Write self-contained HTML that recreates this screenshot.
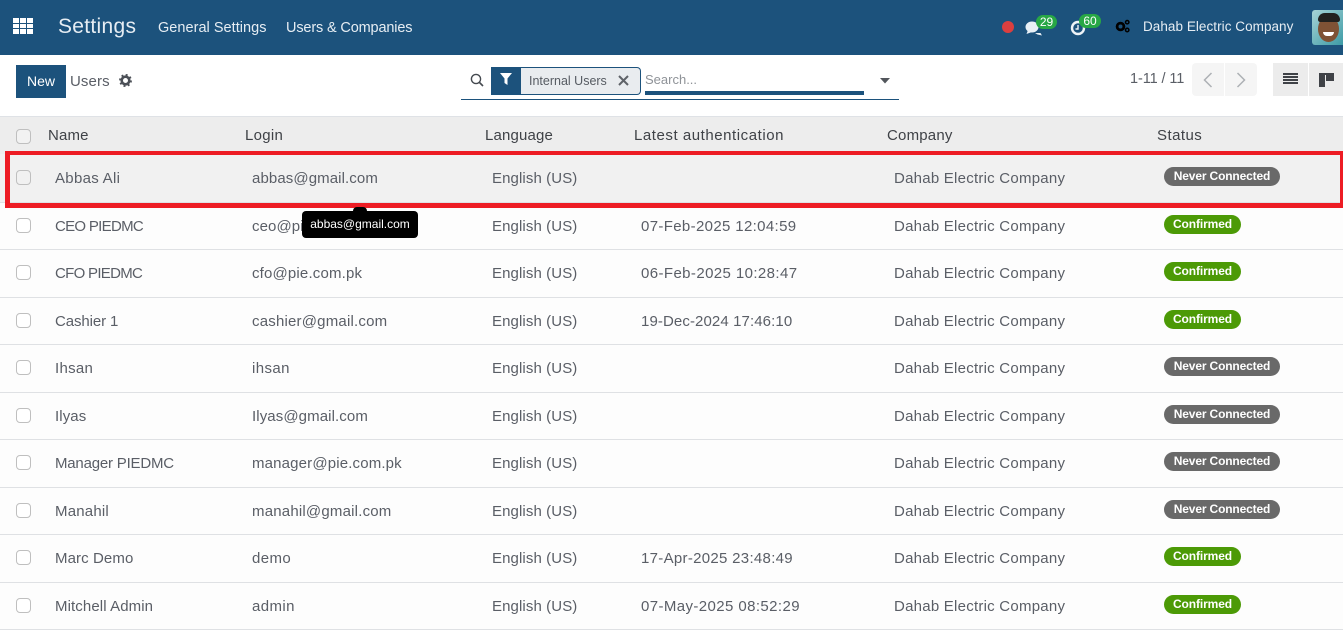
<!DOCTYPE html>
<html><head><meta charset="utf-8"><title>Users</title>
<style>
html,body{margin:0;padding:0;background:#fff}
#p{position:relative;width:1343px;height:631px;overflow:hidden;background:#fff;font-family:"Liberation Sans",sans-serif;color:#4c5057}
#p div,#p svg{position:absolute}
.t{white-space:nowrap;line-height:20px}
.nav{top:0;left:0;width:1343px;height:55px;background:#1c527c}
.r{left:0;width:1343px;background:#fdfdfd;border-bottom:1px solid #dfe1e4;box-sizing:border-box}
.c{white-space:nowrap;font-size:15px;line-height:20px;letter-spacing:.1px;color:#5a5e66;margin-top:1px}
.co{left:894px;letter-spacing:.24px}
.h{white-space:nowrap;font-size:15px;line-height:20px;letter-spacing:.15px;color:#3f4247;top:125px}
.cb{left:16px;width:13px;height:13px;border:1px solid #bfbfbf;border-radius:4px;background:#fff}
.b{left:1164px;height:19px;border-radius:10px;color:#fff;font-size:12px;font-weight:bold;line-height:18px;text-align:center;white-space:nowrap}
.n{width:116px;background:#696969;letter-spacing:-.15px}
.g{width:77px;background:#4c9a06;letter-spacing:-.1px}
.bd{background:#28a745;color:#fff;font-size:12px;line-height:14px;border-radius:8px;text-align:center;height:14px}
</style></head><body><div id="p">
<div class="nav"></div>
<svg style="left:13px;top:18px" width="20" height="16" viewBox="0 0 20 16" fill="#fff"><rect width="6" height="5"/><rect x="7" width="6" height="5"/><rect x="14" width="6" height="5"/><rect y="6" width="6" height="4"/><rect x="7" y="6" width="6" height="4"/><rect x="14" y="6" width="6" height="4"/><rect y="11" width="6" height="5"/><rect x="7" y="11" width="6" height="5"/><rect x="14" y="11" width="6" height="5"/></svg>
<div class="t" style="left:58px;top:16px;font-size:21px;line-height:22px;color:#e6edf3;letter-spacing:.3px">Settings</div>
<div class="t" style="left:158px;top:18px;font-size:14.5px;color:#e6edf3;letter-spacing:.03px">General Settings</div>
<div class="t" style="left:286px;top:18px;font-size:14.5px;color:#e6edf3;letter-spacing:-.15px">Users &amp; Companies</div>
<div style="left:1002px;top:21px;width:12px;height:12px;border-radius:6px;background:#dc3f3f"></div>
<svg style="left:1025px;top:19px" width="18" height="17" viewBox="0 0 18 17"><ellipse cx="7" cy="8" rx="6.5" ry="5.5" fill="#e8f0f6"/><path d="M3 11 L1.5 15 L7 13Z" fill="#e8f0f6"/><path d="M10 14 H15.5 L17 16.5 L12.5 15.5Z" fill="#e8f0f6"/></svg>
<div class="bd" style="left:1036px;top:15px;width:21px">29</div>
<svg style="left:1070px;top:19px" width="17" height="17" viewBox="0 0 17 17"><circle cx="8" cy="9" r="6" fill="none" stroke="#eef3f7" stroke-width="2.4"/><path d="M8 6V10H5.5" fill="none" stroke="#eef3f7" stroke-width="1.4"/></svg>
<div class="bd" style="left:1079px;top:14px;width:22px;height:14px;border-radius:8px">60</div>
<svg style="left:1115px;top:19px" width="15" height="14" viewBox="0 0 15 14"><circle cx="5.5" cy="7.5" r="3.4" fill="none" stroke="#000" stroke-width="2.8"/><circle cx="12.2" cy="3.2" r="1.7" fill="none" stroke="#000" stroke-width="1.5"/><circle cx="12.2" cy="11" r="1.7" fill="none" stroke="#000" stroke-width="1.5"/></svg>
<div class="t" style="left:1143px;top:17px;font-size:13.5px;color:#e6edf3;letter-spacing:.05px">Dahab Electric Company</div>
<div style="left:1312px;top:10px;width:31px;height:35px;border-radius:3px 0 0 3px;background:linear-gradient(135deg,#a7d3d6,#3d9ba6);overflow:hidden">
<div style="left:6px;top:6px;width:21px;height:26px;border-radius:50%;background:#7f5235"></div>
<div style="left:6px;top:3px;width:22px;height:9px;border-radius:9px 9px 3px 3px;background:#22211f"></div>
<div style="left:11px;top:22px;width:11px;height:4px;border-radius:0 0 6px 6px;background:#fff"></div>
</div>

<div style="left:16px;top:65px;width:50px;height:33px;background:#1c527c;color:#fff;font-size:14px;line-height:32px;text-align:center">New</div>
<div class="t" style="left:70px;top:72px;font-size:15px;color:#5a5e66;letter-spacing:.1px">Users</div>
<svg style="left:119px;top:74px" width="13" height="13" viewBox="0 0 13 13"><circle cx="6.5" cy="6.5" r="3.8" fill="none" stroke="#4c5057" stroke-width="2.6"/><circle cx="6.5" cy="6.5" r="5.6" fill="none" stroke="#4c5057" stroke-width="1.7" stroke-dasharray="2 2.4"/></svg>

<svg style="left:470px;top:73px" width="14" height="14" viewBox="0 0 14 14"><circle cx="6" cy="6" r="4.6" fill="none" stroke="#454a50" stroke-width="1.4"/><path d="M9.5 9.5L13 13" stroke="#454a50" stroke-width="1.6"/></svg>
<div style="left:491px;top:67px;width:149px;height:26px;border:1px solid #1c527c;border-left:0;border-radius:0 4px 4px 0;background:#e9ecef"></div>
<div style="left:491px;top:67px;width:30px;height:28px;background:#1c527c"></div>
<svg style="left:500px;top:73px" width="12" height="12" viewBox="0 0 12 12"><path d="M0 0H12L7.5 5.5V12L4.5 10V5.5Z" fill="#fff"/></svg>
<div class="t" style="left:529px;top:71px;font-size:12.5px;color:#565b62">Internal Users</div>
<svg style="left:618px;top:75px" width="11" height="11" viewBox="0 0 11 11"><path d="M1 1L10 10M10 1L1 10" stroke="#5f6369" stroke-width="2"/></svg>
<div class="t" style="left:645px;top:70px;font-size:13px;color:#8f9398">Search...</div>
<div style="left:645px;top:91px;width:219px;height:4px;background:#1c527c"></div>
<svg style="left:880px;top:78px" width="10" height="6" viewBox="0 0 10 6"><path d="M0 0H10L5 5.5Z" fill="#52565c"/></svg>
<div style="left:461px;top:99px;width:438px;height:1px;background:#1c527c"></div>

<div class="t" style="left:1130px;top:69px;font-size:14.5px;color:#5a5e66;letter-spacing:-.1px">1-11 / 11</div>
<div style="left:1192px;top:63px;width:32px;height:33px;background:#f5f5f5;border-radius:4px 0 0 4px"></div>
<div style="left:1225px;top:63px;width:32px;height:33px;background:#f5f5f5;border-radius:0 4px 4px 0"></div>
<svg style="left:1203px;top:72px" width="10" height="16" viewBox="0 0 10 16"><path d="M8.5 1L1.5 8L8.5 15" fill="none" stroke="#adb1b5" stroke-width="1.5"/></svg>
<svg style="left:1236px;top:72px" width="10" height="16" viewBox="0 0 10 16"><path d="M1.5 1L8.5 8L1.5 15" fill="none" stroke="#adb1b5" stroke-width="1.5"/></svg>
<div style="left:1273px;top:63px;width:35px;height:33px;background:#ececec"></div>
<div style="left:1309px;top:63px;width:34px;height:33px;background:#ececec"></div>
<svg style="left:1283px;top:73px" width="15" height="11" viewBox="0 0 15 11" fill="#3f4247"><rect width="15" height="2"/><rect y="3" width="15" height="2"/><rect y="6" width="15" height="2"/><rect y="9" width="15" height="2"/></svg>
<svg style="left:1319px;top:73px" width="15" height="14" viewBox="0 0 15 14" fill="#3f4247"><rect width="15" height="2"/><rect y="2" width="6" height="12"/><rect x="7" y="2" width="8" height="6"/></svg>

<div style="left:0;top:116px;width:1343px;height:37px;background:#ededed;border-top:1px solid #dfe2e6"></div>
<div class="cb" style="top:129px;background:#f2f2f2"></div>
<div class="h" style="left:48px;top:126px">Name</div>
<div class="h" style="left:245px;top:126px;letter-spacing:.3px">Login</div>
<div class="h" style="left:485px;top:126px">Language</div>
<div class="h" style="left:634px;top:126px;letter-spacing:.55px">Latest authentication</div>
<div class="h" style="left:887px;top:126px;letter-spacing:.2px">Company</div>
<div class="h" style="left:1157px;top:126px;letter-spacing:.45px">Status</div>

<div class="r" style="top:154px;height:49px;background:#f1f1f1"></div>
<div class="r" style="top:203px;height:47px"></div>
<div class="r" style="top:250px;height:48px"></div>
<div class="r" style="top:298px;height:47px"></div>
<div class="r" style="top:345px;height:48px"></div>
<div class="r" style="top:393px;height:47px"></div>
<div class="r" style="top:440px;height:48px"></div>
<div class="r" style="top:488px;height:47px"></div>
<div class="r" style="top:535px;height:48px"></div>
<div class="r" style="top:583px;height:47px"></div>

<div class="cb" style="top:170px;background:#f1f1f1"></div><div class="c" style="left:55px;top:168px;letter-spacing:.3px">Abbas Ali</div><div class="c" style="left:252px;top:168px">abbas@gmail.com</div><div class="c" style="left:492px;top:168px">English (US)</div><div class="c co" style="top:168px">Dahab Electric Company</div><div class="b n" style="top:167px">Never Connected</div>
<div class="cb" style="top:218px"></div><div class="c" style="left:55px;top:216px;letter-spacing:-.7px">CEO PIEDMC</div><div class="c" style="left:252px;top:216px">ceo@pie.com.pk</div><div class="c" style="left:492px;top:216px">English (US)</div><div class="c" style="left:641px;top:216px;letter-spacing:.35px">07-Feb-2025 12:04:59</div><div class="c co" style="top:216px">Dahab Electric Company</div><div class="b g" style="top:215px">Confirmed</div>
<div class="cb" style="top:265px"></div><div class="c" style="left:55px;top:263px;letter-spacing:-.7px">CFO PIEDMC</div><div class="c" style="left:252px;top:263px;letter-spacing:.17px">cfo@pie.com.pk</div><div class="c" style="left:492px;top:263px">English (US)</div><div class="c" style="left:641px;top:263px;letter-spacing:.4px">06-Feb-2025 10:28:47</div><div class="c co" style="top:263px">Dahab Electric Company</div><div class="b g" style="top:262px">Confirmed</div>
<div class="cb" style="top:313px"></div><div class="c" style="left:55px;top:311px;letter-spacing:-.1px">Cashier 1</div><div class="c" style="left:252px;top:311px;letter-spacing:.2px">cashier@gmail.com</div><div class="c" style="left:492px;top:311px">English (US)</div><div class="c" style="left:641px;top:311px">19-Dec-2024 17:46:10</div><div class="c co" style="top:311px">Dahab Electric Company</div><div class="b g" style="top:310px">Confirmed</div>
<div class="cb" style="top:360px"></div><div class="c" style="left:55px;top:358px;letter-spacing:.3px">Ihsan</div><div class="c" style="left:252px;top:358px;letter-spacing:.4px">ihsan</div><div class="c" style="left:492px;top:358px">English (US)</div><div class="c co" style="top:358px">Dahab Electric Company</div><div class="b n" style="top:357px">Never Connected</div>
<div class="cb" style="top:408px"></div><div class="c" style="left:55px;top:406px">Ilyas</div><div class="c" style="left:252px;top:406px">Ilyas@gmail.com</div><div class="c" style="left:492px;top:406px">English (US)</div><div class="c co" style="top:406px">Dahab Electric Company</div><div class="b n" style="top:405px">Never Connected</div>
<div class="cb" style="top:455px"></div><div class="c" style="left:55px;top:453px;letter-spacing:-.2px">Manager PIEDMC</div><div class="c" style="left:252px;top:453px;letter-spacing:.16px">manager@pie.com.pk</div><div class="c" style="left:492px;top:453px">English (US)</div><div class="c co" style="top:453px">Dahab Electric Company</div><div class="b n" style="top:452px">Never Connected</div>
<div class="cb" style="top:503px"></div><div class="c" style="left:55px;top:501px;letter-spacing:.2px">Manahil</div><div class="c" style="left:252px;top:501px;letter-spacing:.2px">manahil@gmail.com</div><div class="c" style="left:492px;top:501px">English (US)</div><div class="c co" style="top:501px">Dahab Electric Company</div><div class="b n" style="top:500px">Never Connected</div>
<div class="cb" style="top:550px"></div><div class="c" style="left:55px;top:548px">Marc Demo</div><div class="c" style="left:252px;top:548px;letter-spacing:.4px">demo</div><div class="c" style="left:492px;top:548px">English (US)</div><div class="c" style="left:641px;top:548px;letter-spacing:.3px">17-Apr-2025 23:48:49</div><div class="c co" style="top:548px">Dahab Electric Company</div><div class="b g" style="top:547px">Confirmed</div>
<div class="cb" style="top:598px"></div><div class="c" style="left:55px;top:596px">Mitchell Admin</div><div class="c" style="left:252px;top:596px;letter-spacing:.4px">admin</div><div class="c" style="left:492px;top:596px">English (US)</div><div class="c" style="left:641px;top:596px;letter-spacing:.4px">07-May-2025 08:52:29</div><div class="c co" style="top:596px">Dahab Electric Company</div><div class="b g" style="top:595px">Confirmed</div>

<div style="left:5px;top:151px;width:1330px;height:48px;border:solid #ed1c24;border-width:4px 4px 5px 5px"></div>
<div style="left:353px;top:207px;width:14px;height:6px;background:#000;border-radius:4px 4px 0 0"></div>
<div class="t" style="left:302px;top:211px;width:116px;height:27px;background:#000;border-radius:4px;color:#fff;font-size:12px;line-height:27px;text-align:center">abbas@gmail.com</div>
</div></body></html>
